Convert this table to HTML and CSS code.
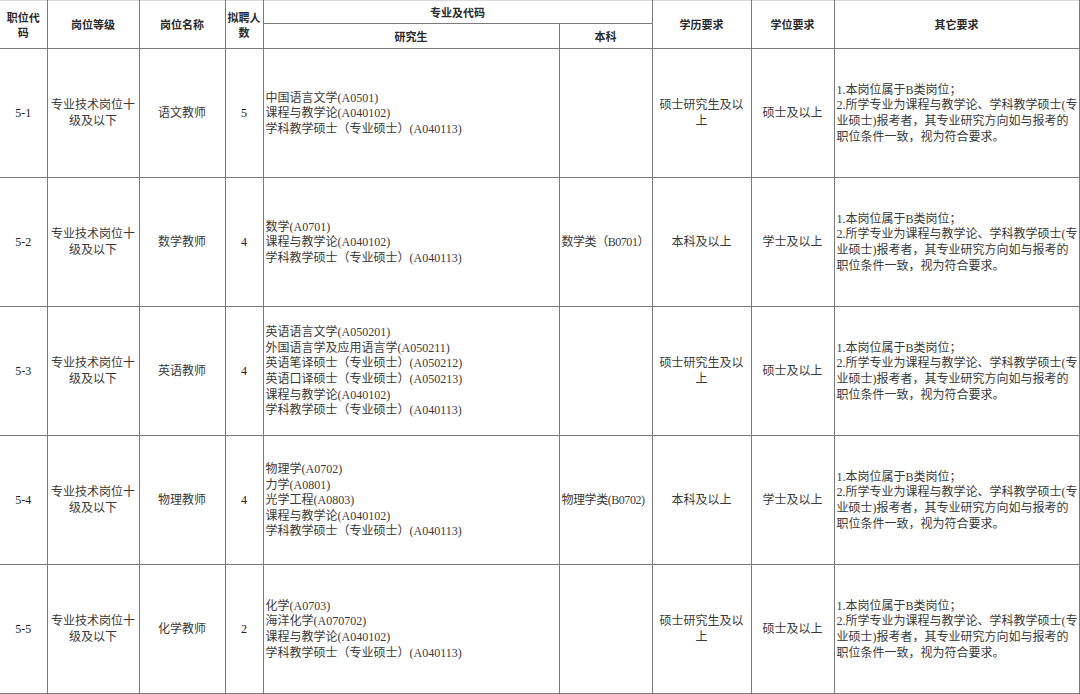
FILE: index.html
```html
<!DOCTYPE html>
<html lang="zh-CN">
<head>
<meta charset="utf-8">
<title>招聘岗位表</title>
<link rel="stylesheet" href="styles.css">
</head>
<body>
<table class="jobs">
  <colgroup>
    <col class="c-code"><col class="c-level"><col class="c-name"><col class="c-num">
    <col class="c-grad"><col class="c-under"><col class="c-edu"><col class="c-deg"><col class="c-other">
  </colgroup>
  <thead>
    <tr class="h1">
      <th rowspan="2" class="narrow">职位代<br>码</th>
      <th rowspan="2">岗位等级</th>
      <th rowspan="2">岗位名称</th>
      <th rowspan="2" class="narrow">拟聘人<br>数</th>
      <th colspan="2">专业及代码</th>
      <th rowspan="2">学历要求</th>
      <th rowspan="2">学位要求</th>
      <th rowspan="2">其它要求</th>
    </tr>
    <tr class="h2">
      <th>研究生</th>
      <th>本科</th>
    </tr>
  </thead>
  <tbody>
    <tr>
      <td class="ctr latin">5-1</td>
      <td class="ctr">专业技术岗位十<br>级及以下</td>
      <td class="ctr">语文教师</td>
      <td class="ctr latin">5</td>
      <td class="left">中国语言文学(A0501)<br>课程与教学论(A040102)<br>学科教学硕士（专业硕士）(A040113)</td>
      <td class="left under"></td>
      <td class="ctr">硕士研究生及以<br>上</td>
      <td class="ctr">硕士及以上</td>
      <td class="left other">1.本岗位属于B类岗位；<br>2.所学专业为课程与教学论、学科教学硕士(专<br>业硕士)报考者，其专业研究方向如与报考的<br>职位条件一致，视为符合要求。</td>
    </tr>
    <tr>
      <td class="ctr latin">5-2</td>
      <td class="ctr">专业技术岗位十<br>级及以下</td>
      <td class="ctr">数学教师</td>
      <td class="ctr latin">4</td>
      <td class="left">数学(A0701)<br>课程与教学论(A040102)<br>学科教学硕士（专业硕士）(A040113)</td>
      <td class="left under">数学类（B0701）</td>
      <td class="ctr">本科及以上</td>
      <td class="ctr">学士及以上</td>
      <td class="left other">1.本岗位属于B类岗位；<br>2.所学专业为课程与教学论、学科教学硕士(专<br>业硕士)报考者，其专业研究方向如与报考的<br>职位条件一致，视为符合要求。</td>
    </tr>
    <tr>
      <td class="ctr latin">5-3</td>
      <td class="ctr">专业技术岗位十<br>级及以下</td>
      <td class="ctr">英语教师</td>
      <td class="ctr latin">4</td>
      <td class="left">英语语言文学(A050201)<br>外国语言学及应用语言学(A050211)<br>英语笔译硕士（专业硕士）(A050212)<br>英语口译硕士（专业硕士）(A050213)<br>课程与教学论(A040102)<br>学科教学硕士（专业硕士）(A040113)</td>
      <td class="left under"></td>
      <td class="ctr">硕士研究生及以<br>上</td>
      <td class="ctr">硕士及以上</td>
      <td class="left other">1.本岗位属于B类岗位；<br>2.所学专业为课程与教学论、学科教学硕士(专<br>业硕士)报考者，其专业研究方向如与报考的<br>职位条件一致，视为符合要求。</td>
    </tr>
    <tr>
      <td class="ctr latin">5-4</td>
      <td class="ctr">专业技术岗位十<br>级及以下</td>
      <td class="ctr">物理教师</td>
      <td class="ctr latin">4</td>
      <td class="left">物理学(A0702)<br>力学(A0801)<br>光学工程(A0803)<br>课程与教学论(A040102)<br>学科教学硕士（专业硕士）(A040113)</td>
      <td class="left under">物理学类(B0702)</td>
      <td class="ctr">本科及以上</td>
      <td class="ctr">学士及以上</td>
      <td class="left other">1.本岗位属于B类岗位；<br>2.所学专业为课程与教学论、学科教学硕士(专<br>业硕士)报考者，其专业研究方向如与报考的<br>职位条件一致，视为符合要求。</td>
    </tr>
    <tr>
      <td class="ctr latin">5-5</td>
      <td class="ctr">专业技术岗位十<br>级及以下</td>
      <td class="ctr">化学教师</td>
      <td class="ctr latin">2</td>
      <td class="left">化学(A0703)<br>海洋化学(A070702)<br>课程与教学论(A040102)<br>学科教学硕士（专业硕士）(A040113)</td>
      <td class="left under"></td>
      <td class="ctr">硕士研究生及以<br>上</td>
      <td class="ctr">硕士及以上</td>
      <td class="left other">1.本岗位属于B类岗位；<br>2.所学专业为课程与教学论、学科教学硕士(专<br>业硕士)报考者，其专业研究方向如与报考的<br>职位条件一致，视为符合要求。</td>
    </tr>
  </tbody>
</table>
</body>
</html>
```

FILE: styles.css
```css
html, body {
  margin: 0;
  padding: 0;
  background: #ffffff;
}

body {
  font-family: "Liberation Serif", "Noto Sans CJK SC", serif;
  font-size: 12px;
  line-height: 15.6px;
  color: #3a3a3a;
}

.jobs {
  width: 1079px;
  table-layout: fixed;
  border-collapse: collapse;
  border-spacing: 0;
}

.c-code  { width: 47px; }
.c-level { width: 92px; }
.c-name  { width: 86px; }
.c-num   { width: 38px; }
.c-grad  { width: 296px; }
.c-under { width: 93px; }
.c-edu   { width: 99px; }
.c-deg   { width: 83px; }
.c-other { width: 245px; }

.jobs th,
.jobs td {
  border: 1px solid #7a7a7a;
  padding: 0 2px;
  vertical-align: middle;
  overflow: hidden;
}

.jobs td {
  padding-top: 2px;
}

.jobs tr > :first-child {
  border-left: none;
}

.jobs thead tr:first-child th {
  border-top: 1px solid #d8d8d8;
}

.jobs th {
  font-size: 11px;
  font-weight: bold;
  color: #2a2a2a;
  text-align: center;
  line-height: 15px;
  padding-top: 2px;
}

.jobs th.narrow {
  padding: 2px 0 0;
  white-space: nowrap;
}

.jobs .h1 { height: 23px; }
.jobs .h2 { height: 25px; }

.jobs tbody tr { height: 129px; }

.ctr {
  text-align: center;
  white-space: nowrap;
}

.left {
  text-align: left;
  white-space: nowrap;
}

.jobs td.under {
  padding-left: 2px;
  padding-right: 0;
  letter-spacing: -0.45px;
}

.latin {
  color: #222222;
}

.other {
  padding-left: 2px;
}
```
